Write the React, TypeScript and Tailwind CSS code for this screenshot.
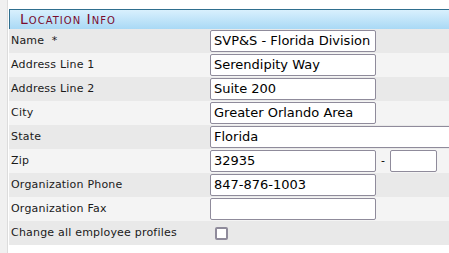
import React from 'react'

const rows: { label: string; value?: string; kind: 'text' | 'wide' | 'zip' | 'check' }[] = [
  { label: 'Name  *', value: 'SVP&S - Florida Division', kind: 'text' },
  { label: 'Address Line 1', value: 'Serendipity Way', kind: 'text' },
  { label: 'Address Line 2', value: 'Suite 200', kind: 'text' },
  { label: 'City', value: 'Greater Orlando Area', kind: 'text' },
  { label: 'State', value: 'Florida', kind: 'wide' },
  { label: 'Zip', value: '32935', kind: 'zip' },
  { label: 'Organization Phone', value: '847-876-1003', kind: 'text' },
  { label: 'Organization Fax', value: '', kind: 'text' },
  { label: 'Change all employee profiles', kind: 'check' },
]

function Field({ value, w }: { value: string; w: string }) {
  return (
    <div className={`${w} h-[22px] border border-[#8f8b9b] rounded-[2px] bg-white px-[3px] flex items-center text-[13px] text-black whitespace-nowrap overflow-hidden`}>
      {value}
    </div>
  )
}

export default function App() {
  return (
    <div className="w-[449px] h-[253px] overflow-hidden bg-white flex" style={{ fontFamily: '"DejaVu Sans", Verdana, sans-serif' }}>
      <div className="w-[8px] shrink-0 bg-[#f0f0f0] border-r border-[#dcdcdc]"></div>
      <div className="flex-1 pt-[9px] pl-[1px]">
        <div className="h-[20px] border-t border-l border-[#2f6f8f] bg-gradient-to-b from-[#d9f0fd] to-[#a9d9f5] pl-[10px] flex items-center">
          <span className="text-[#7a0c2e] text-[14px] tracking-[1px]" style={{ fontVariant: 'small-caps' }}>Location Info</span>
        </div>
        {rows.map((r, i) => (
          <div key={i} className={`h-[24px] flex items-center ${i % 2 === 0 ? 'bg-[#e9e9e9]' : 'bg-[#f4f4f4]'}`}>
            <div className="w-[201px] shrink-0 pl-[2px] text-[11px] tracking-[0.2px] text-[#1a1a1a] whitespace-pre">{r.label}</div>
            {r.kind === 'text' && <Field value={r.value ?? ''} w="w-[166px]" />}
            {r.kind === 'wide' && <Field value={r.value ?? ''} w="w-[260px]" />}
            {r.kind === 'zip' && (
              <div className="flex items-center">
                <Field value={r.value ?? ''} w="w-[166px]" />
                <span className="text-[11px] text-black mx-[5px]">-</span>
                <Field value="" w="w-[47px]" />
              </div>
            )}
            {r.kind === 'check' && (
              <div className="ml-[5px] w-[13px] h-[13px] border-2 border-[#8f8b9b] rounded-[2px] bg-white"></div>
            )}
          </div>
        ))}
      </div>
    </div>
  )
}
